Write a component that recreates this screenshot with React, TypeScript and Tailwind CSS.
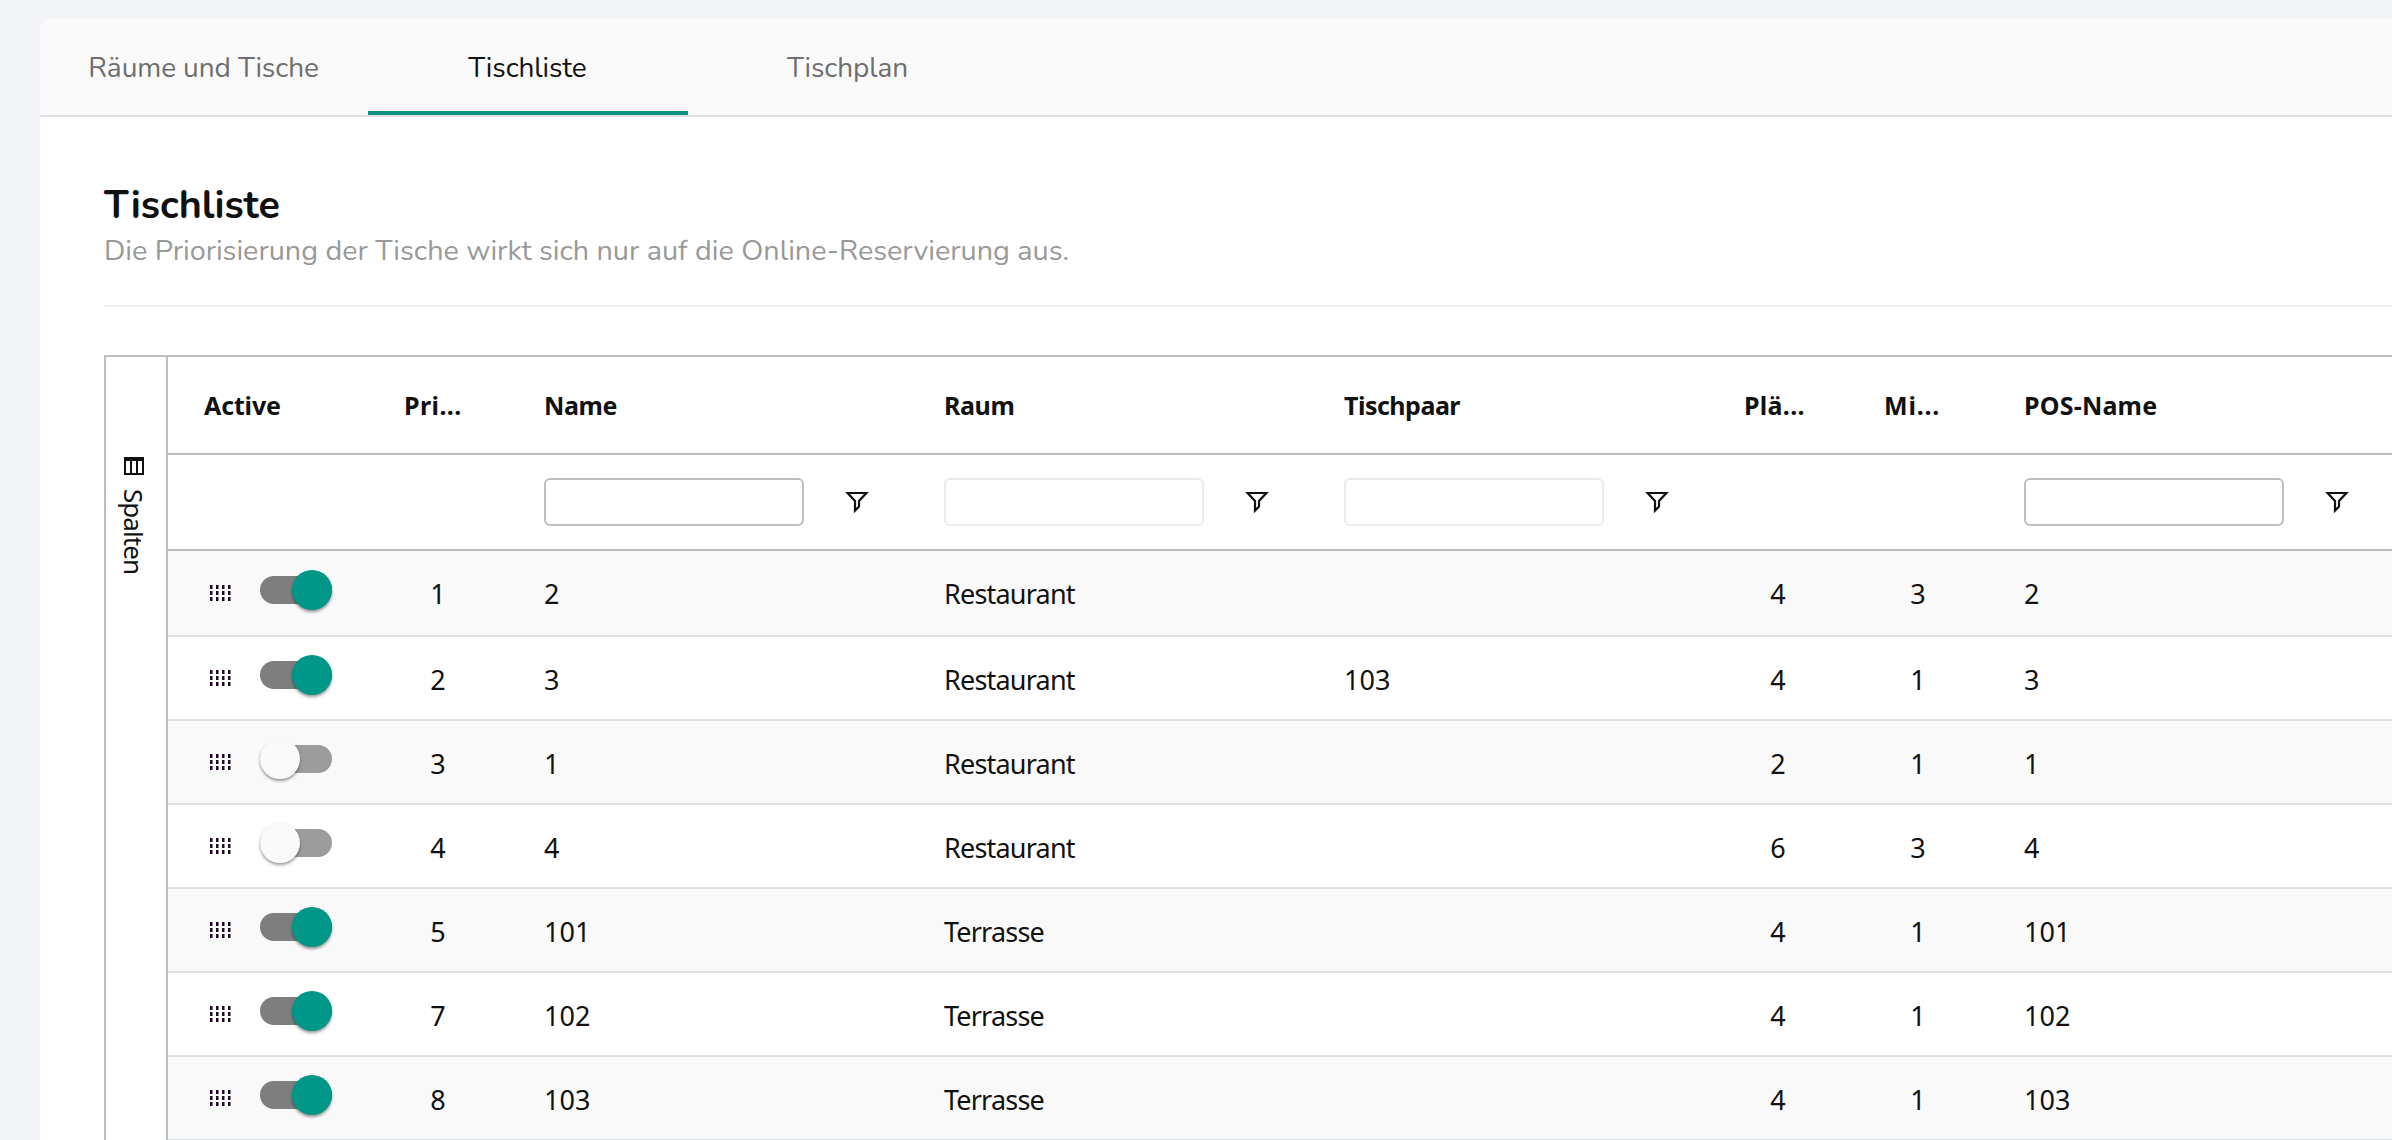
type Row = {
  active: boolean
  prio: string
  name: string
  raum: string
  paar: string
  plaetze: string
  min: string
}

const rows: Row[] = [
  { active: true, prio: '1', name: '2', raum: 'Restaurant', paar: '', plaetze: '4', min: '3' },
  { active: true, prio: '2', name: '3', raum: 'Restaurant', paar: '103', plaetze: '4', min: '1' },
  { active: false, prio: '3', name: '1', raum: 'Restaurant', paar: '', plaetze: '2', min: '1' },
  { active: false, prio: '4', name: '4', raum: 'Restaurant', paar: '', plaetze: '6', min: '3' },
  { active: true, prio: '5', name: '101', raum: 'Terrasse', paar: '', plaetze: '4', min: '1' },
  { active: true, prio: '7', name: '102', raum: 'Terrasse', paar: '', plaetze: '4', min: '1' },
  { active: true, prio: '8', name: '103', raum: 'Terrasse', paar: '', plaetze: '4', min: '1' },
]

const COLS = 'grid grid-cols-[200px_140px_400px_400px_400px_140px_140px_400px]'

function Tab({ label, active, width }: { label: string; active?: boolean; width: string }) {
  return (
    <button
      className={`${width} h-24 text-[28px] leading-[94px] pt-[2px] pr-px tracking-[-0.08px] whitespace-nowrap border-b-4 ${
        active ? 'border-[#129181] text-[#111]' : 'border-transparent text-[#6e6e6e]'
      }`}
    >
      {label}
    </button>
  )
}

function FunnelIcon() {
  return (
    <svg width="24" height="24" viewBox="0 0 24 24" fill="none" stroke="#111" strokeWidth="2.2" className="shrink-0">
      <path d="M2.6 3h18.8L14 11v5.6l-4 4V11z" />
    </svg>
  )
}

function ColumnsIcon() {
  return (
    <svg width="20" height="18" viewBox="0 0 20 18">
      <path fill="#111" fillRule="evenodd" d="M0 0h20v18H0zM2 4v12h4V4zM8 4v12h4V4zM14 4v12h4V4z" />
    </svg>
  )
}

function DragHandle() {
  return (
    <svg width="21" height="16" viewBox="0 0 21 16" fill="#1d0a24">
      {[0, 6, 12, 18].map((x) =>
        [0, 6, 12].map((y) => <rect key={`${x}-${y}`} x={x} y={y} width="2.5" height="4" />),
      )}
    </svg>
  )
}

function Toggle({ on }: { on: boolean }) {
  return (
    <div
      className={`w-[72px] h-7 rounded-full flex items-center mb-[6px] ${
        on ? 'bg-[#7e7e7e] justify-end' : 'bg-[#9c9c9c] justify-start'
      }`}
    >
      <div
        className={`size-10 shrink-0 rounded-full shadow-[0_2px_3px_rgba(0,0,0,0.4)] ${
          on ? 'bg-[#009688]' : 'bg-[#fafafa]'
        }`}
      />
    </div>
  )
}

function Filter({ disabled }: { disabled?: boolean }) {
  return (
    <div className="flex items-center px-9 pb-px">
      <div
        className={`w-[260px] h-12 rounded-md border-2 bg-white ${disabled ? 'border-[#ebebeb]' : 'border-[#babfc3]'}`}
      />
      <div className="ml-[41px]">
        <FunnelIcon />
      </div>
    </div>
  )
}

function TableRow({ row, index }: { row: Row; index: number }) {
  const text = 'px-9 pt-[25px] leading-9'
  return (
    <div
      className={`${COLS} border-b-2 border-[#dde0e2] ${index === 0 ? 'h-[86px]' : 'h-[84px]'} ${
        index % 2 === 0 ? 'bg-[#f9f9f9]' : 'bg-white'
      }`}
    >
      <div className="flex items-center pl-[42px] gap-[29px]">
        <DragHandle />
        <Toggle on={row.active} />
      </div>
      <div className={`${text} text-center`}>{row.prio}</div>
      <div className={text}>{row.name}</div>
      <div className={`${text} tracking-[-0.8px]`}>{row.raum}</div>
      <div className={text}>{row.paar}</div>
      <div className={`${text} text-center`}>{row.plaetze}</div>
      <div className={`${text} text-center`}>{row.min}</div>
      <div className={text}>{row.name}</div>
    </div>
  )
}

export default function App() {
  return (
    <div className="w-full h-[1140px] overflow-hidden bg-[#f2f4f8] pt-[19px] pl-10 text-[#111] font-['Noto_Sans',sans-serif]">
      <div className="h-full bg-white rounded-tl-[12px] overflow-hidden">
        <nav className="flex h-[98px] bg-[#fafafa] border-b-2 border-[#dfe1e3] font-['Nunito','Noto_Sans',sans-serif]">
          <Tab label="Räume und Tische" width="w-[328px]" />
          <Tab label="Tischliste" width="w-[320px]" active />
          <Tab label="Tischplan" width="w-[320px]" />
        </nav>

        <main className="pl-16">
          <header className="h-[190px] pt-[62px] border-b-2 border-[#efefef] font-['Nunito','Noto_Sans',sans-serif]">
            <h1 className="text-[39.5px] leading-[53px] font-bold">Tischliste</h1>
            <p className="text-[28.77px] leading-[38px] text-[#999]">
              Die Priorisierung der Tische wirkt sich nur auf die Online-Reservierung aus.
            </p>
          </header>

          <div className="mt-12 flex h-[800px] border-t-2 border-l-2 border-[#babfc3]">
            <aside className="w-[62px] shrink-0 border-r-2 border-[#babfc3] pt-[100px] pr-1 flex flex-col items-center gap-[14px]">
              <ColumnsIcon />
              <span className="[writing-mode:vertical-rl] text-[26px] leading-9 tracking-[-0.95px]">Spalten</span>
            </aside>
            <div className="grow min-w-0 overflow-hidden">
              <div className={`${COLS} h-[98px] border-b-2 border-[#babdbe] text-[25px] font-bold leading-[96px]`}>
                <div className="px-9 tracking-[-0.15px]">Active</div>
                <div className="px-9 tracking-[0.4px]">Pri...</div>
                <div className="px-9 tracking-[-0.4px]">Name</div>
                <div className="px-9 tracking-[-0.4px]">Raum</div>
                <div className="px-9 tracking-[-0.5px]">Tischpaar</div>
                <div className="px-9 tracking-[0.3px]">Plä...</div>
                <div className="px-9 tracking-[0.8px]">Mi...</div>
                <div className="px-9 tracking-[0.2px]">POS-Name</div>
              </div>
              <div className={`${COLS} h-24 border-b-2 border-[#babdbe]`}>
                <div />
                <div />
                <Filter />
                <Filter disabled />
                <Filter disabled />
                <div />
                <div />
                <Filter />
              </div>
              <div className="text-[27px]">
                {rows.map((row, i) => (
                  <TableRow key={row.prio} row={row} index={i} />
                ))}
              </div>
            </div>
          </div>
        </main>
      </div>
    </div>
  )
}
